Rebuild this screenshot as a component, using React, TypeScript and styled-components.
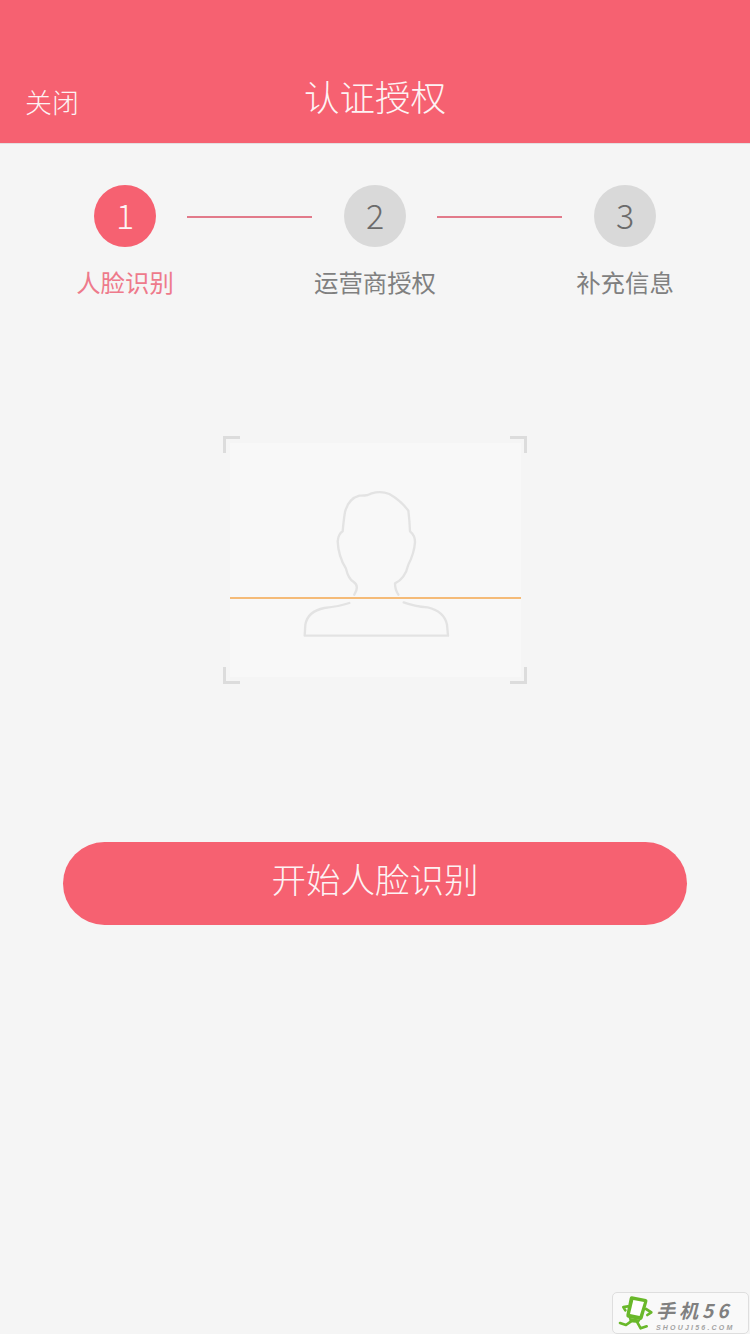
import styled, { createGlobalStyle } from 'styled-components';

const CJK = `"Noto Sans CJK SC", "Noto Sans", sans-serif`;

const GlobalStyle = createGlobalStyle`
  html, body {
    margin: 0;
    padding: 0;
    background: #f5f5f5;
  }
  body {
    font-family: ${CJK};
  }
`;

const Page = styled.div`
  position: relative;
  width: 750px;
  height: 1334px;
  overflow: hidden;
  background: #f5f5f5;
`;

const Header = styled.header`
  box-sizing: border-box;
  height: 144px;
  padding: 0 25px 22px;
  display: grid;
  grid-template-columns: 1fr auto 1fr;
  align-items: end;
  background: #f66171;
  border-bottom: 1px solid #e3dfe0;
  color: #fdf3f4;
`;

const CloseLink = styled.a`
  font-size: 27px;
  line-height: 38px;
  font-weight: 300;
`;

const Title = styled.h1`
  margin: 0;
  font-size: 35.5px;
  line-height: 50px;
  font-weight: 300;
  letter-spacing: 0;
`;

const StepCircles = styled.div`
  display: flex;
  align-items: center;
  padding: 41px 0 0 94px;
`;

const Circle = styled.div<{ $active?: boolean }>`
  width: 62px;
  height: 62px;
  padding-bottom: 4px;
  box-sizing: border-box;
  border-radius: 50%;
  display: flex;
  align-items: center;
  justify-content: center;
  font-size: 34px;
  font-weight: 300;
  background: ${({ $active }) => ($active ? '#f66171' : '#d9d9d9')};
  color: ${({ $active }) => ($active ? '#fdf3f4' : '#6b6b6b')};
`;

const Connector = styled.div`
  width: 125px;
  height: 2px;
  margin: 2px 32px 0 31px;
  background: #e27a8a;
`;

const StepLabels = styled.div`
  display: grid;
  grid-template-columns: repeat(3, 250px);
  margin-top: 17px;
`;

const StepLabel = styled.div<{ $active?: boolean }>`
  text-align: center;
  font-size: 24.4px;
  line-height: 36px;
  color: ${({ $active }) => ($active ? '#ee7a8b' : '#808080')};
`;

const ScanFrame = styled.div`
  position: relative;
  box-sizing: border-box;
  width: 304px;
  height: 248px;
  margin: 136px 0 0 223px;
  padding: 7px 6px 7px 7px;
`;

const ScanPanel = styled.div`
  height: 234px;
  display: flex;
  justify-content: center;
  align-items: flex-start;
  background: #f8f8f8;
`;

const Silhouette = styled.svg`
  width: 150px;
  height: 152px;
  margin-top: 45px;
  fill: none;
  stroke: #e3e3e3;
  stroke-width: 7;
  stroke-linejoin: round;
  stroke-linecap: round;
`;

const ScanLine = styled.div`
  position: absolute;
  left: 7px;
  right: 6px;
  top: 161px;
  height: 2px;
  background: #f5bb78;
`;

const Corner = styled.span<{ $v: 'top' | 'bottom'; $h: 'left' | 'right' }>`
  position: absolute;
  width: 17px;
  height: 17px;
  ${({ $v }) => $v}: 0;
  ${({ $h }) => $h}: 0;
  border-${({ $v }) => $v}: 3px solid #dcdcdc;
  border-${({ $h }) => $h}: 3px solid #dcdcdc;
  box-sizing: border-box;
`;

const StartButton = styled.button`
  display: block;
  width: 624px;
  height: 83px;
  margin: 158px 0 0 63px;
  padding: 0 0 11px;
  border: 0;
  border-radius: 42px;
  background: #f66171;
  color: #fdf3f4;
  font-family: ${CJK};
  font-size: 34.5px;
  font-weight: 300;
  line-height: 1;
`;

const Watermark = styled.div`
  position: absolute;
  right: 1px;
  bottom: 0;
  box-sizing: border-box;
  width: 137px;
  height: 42px;
  display: flex;
  align-items: center;
  padding-left: 5px;
  background: #f9f9f9;
  border: 1px solid #dedede;
  border-radius: 5px;
`;

const WatermarkLogo = styled.svg`
  width: 38px;
  height: 40px;
  flex: none;
`;

const WatermarkText = styled.div`
  display: flex;
  flex-direction: column;
  gap: 5px;
  padding-top: 4px;
  color: #808080;
  font-style: italic;
  font-weight: 700;
`;

const WatermarkName = styled.span`
  font-size: 19px;
  line-height: 19px;
  letter-spacing: 4px;
  white-space: nowrap;
`;

const WatermarkUrl = styled.span`
  font-family: "Liberation Sans", sans-serif;
  font-size: 7px;
  line-height: 7px;
  letter-spacing: 2.2px;
  color: #a3a3a3;
  white-space: nowrap;
`;

const steps = ['人脸识别', '运营商授权', '补充信息'];

export default function App() {
  return (
    <Page>
      <GlobalStyle />
      <Header>
        <CloseLink>关闭</CloseLink>
        <Title>认证授权</Title>
      </Header>

      <StepCircles>
        <Circle $active>1</Circle>
        <Connector />
        <Circle>2</Circle>
        <Connector />
        <Circle>3</Circle>
      </StepCircles>
      <StepLabels>
        {steps.map((label, i) => (
          <StepLabel key={label} $active={i === 0}>
            {label}
          </StepLabel>
        ))}
      </StepLabels>

      <ScanFrame>
        <Corner $v="top" $h="left" />
        <Corner $v="top" $h="right" />
        <Corner $v="bottom" $h="left" />
        <Corner $v="bottom" $h="right" />
        <ScanPanel>
          <Silhouette viewBox="270 190 450 456">
            <path d="M430 510 Q446 484 428 472 Q412 462 405 432 Q382 395 380 350 Q382 328 395 320 Q398 285 402 262 Q412 222 445 213 Q470 214 482 206 Q510 198 535 208 Q570 228 592 258 Q596 290 597 320 Q612 332 612 352 Q610 385 592 420 Q582 462 552 476 Q552 495 562 510" />
            <path d="M415 535 Q385 545 340 550 Q290 560 283 600 L281 633 L711 633 L708 600 Q700 560 650 548 Q610 545 578 533" />
          </Silhouette>
        </ScanPanel>
        <ScanLine />
      </ScanFrame>

      <StartButton>开始人脸识别</StartButton>

      <Watermark>
        <WatermarkLogo viewBox="20 10 114 120">
          <path d="M62 20 L104 28 Q110 30 108 36 L94 86 Q92 92 86 91 L50 84 Q44 82 45 76 L55 26 Q56 19 62 20 Z" fill="#69b82a" />
          <path d="M66 31 L98 37 L85 79 L56 73 Z" fill="#fff" />
          <path d="M52 84 L88 90 L82 100 L56 98 Z" fill="#69b82a" />
          <path d="M50 50 L36 52 L42 62 M104 58 L120 68 L108 76 M58 96 L44 106 L26 100 M78 98 L88 116 L106 110" fill="none" stroke="#69b82a" strokeWidth="8" strokeLinecap="round" strokeLinejoin="round" />
        </WatermarkLogo>
        <WatermarkText>
          <WatermarkName>手机56</WatermarkName>
          <WatermarkUrl>SHOUJI56.COM</WatermarkUrl>
        </WatermarkText>
      </Watermark>
    </Page>
  );
}
